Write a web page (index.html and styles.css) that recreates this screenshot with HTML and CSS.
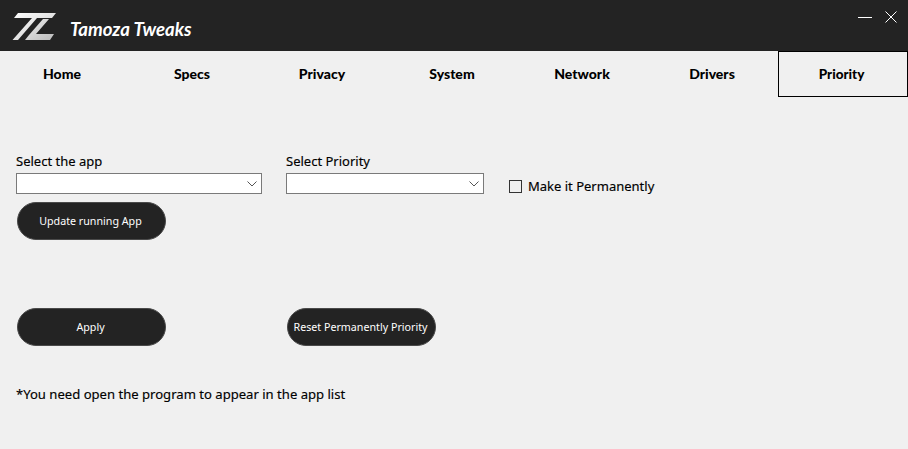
FILE: index.html
```html
<!DOCTYPE html>
<html lang="en">
<head>
<meta charset="utf-8">
<title>Tamoza Tweaks</title>
<link rel="stylesheet" href="styles.css">
</head>
<body>
<div class="app">
  <header class="titlebar">
    <svg class="logo" width="46" height="30" viewBox="0 0 46 30" aria-hidden="true">
      <defs>
        <linearGradient id="lg" x1="0" y1="0" x2="1" y2="1">
          <stop offset="0" stop-color="#ffffff"/>
          <stop offset="1" stop-color="#c8c8c8"/>
        </linearGradient>
      </defs>
      <path fill="url(#lg)" d="M6 1H44L40 6H25L6 28H0.5L20 6H2Z"/>
      <path fill="url(#lg)" d="M31 7H37L24 22H42L38 28H13L17 23Z" opacity="0.92"/>
    </svg>
    <div class="brand">Tamoza Tweaks</div>
    <div class="winctl">
      <span class="min"></span>
      <svg class="close" width="12" height="12" viewBox="0 0 12 12" aria-hidden="true"><path d="M.5.5l11 11M11.500.5l-11 11" stroke="#fff" stroke-width="1" fill="none"/></svg>
    </div>
  </header>
  <nav class="tabs">
    <div class="tab">Home</div>
    <div class="tab">Specs</div>
    <div class="tab">Privacy</div>
    <div class="tab">System</div>
    <div class="tab">Network</div>
    <div class="tab">Drivers</div>
    <div class="tab active">Priority</div>
  </nav>
  <main class="content">
    <div class="row-top">
      <div class="col col-app">
        <label class="lbl">Select the app</label>
        <div class="select">
          <svg width="10" height="6" viewBox="0 0 10 6" aria-hidden="true"><path d="M.5.500l4.500 4.500 4.500-4.500" stroke="#555" fill="none"/></svg>
        </div>
        <button class="btn btn-update">Update running App</button>
      </div>
      <div class="col col-pri">
        <label class="lbl">Select Priority</label>
        <div class="select">
          <svg width="10" height="6" viewBox="0 0 10 6" aria-hidden="true"><path d="M.5.500l4.500 4.500 4.500-4.500" stroke="#555" fill="none"/></svg>
        </div>
      </div>
      <div class="check">
        <span class="box"></span>
        <span class="check-text">Make it Permanently</span>
      </div>
    </div>
    <div class="row-actions">
      <button class="btn">Apply</button>
      <button class="btn">Reset Permanently Priority</button>
    </div>
    <p class="note">*You need open the program to appear in the app list</p>
  </main>
</div>
</body>
</html>
```

FILE: styles.css
```css
* { box-sizing: border-box; }
html, body { margin: 0; padding: 0; }
body { background: #f0f0f0; font-family: "Noto Sans", "Open Sans", sans-serif; width: 908px; height: 449px; overflow: hidden; }
.titlebar { height: 51px; background: #232323; display: flex; align-items: center; padding-left: 12px; position: relative; }
.logo { flex: none; margin-top: 3px; }
.brand { margin-left: 12px; margin-top: 7px; font-family: "Lato", sans-serif; font-style: italic; font-weight: 700; font-size: 18.600px; color: #fff; }
.winctl { margin-left: auto; display: flex; align-items: center; gap: 13px; padding: 0 11px 0 0; align-self: flex-start; height: 34px; }
.min { display: block; width: 14px; height: 1px; background: #fff; }
.close { display: block; }
.tabs { display: grid; grid-template-columns: repeat(7, 130px); height: 46px; margin-left: -2px; }
.tab { display: flex; align-items: center; justify-content: center; font-family: "Lato", sans-serif; font-weight: 900; font-size: 14px; color: #000; padding-bottom: 1px; padding-right: 2px; }
.active { border: 1px solid #000; padding-right: 3px; font-size: 13.500px; }
.content { padding: 56px 0 0 16px; }
.row-top { display: flex; align-items: flex-start; height: 155px; }
.lbl { display: block; font-size: 13px; font-weight: 400; line-height: 17px; color: #000; -webkit-text-stroke: 0.15px #000; }
.col-app { width: 270px; }
.col-pri { width: 223px; }
.select { margin-top: 3px; height: 21px; background: #fff; border: 1px solid #7a7a7a; display: flex; align-items: center; justify-content: flex-end; padding-right: 4px; }
.col-app .select { width: 246px; }
.col-pri .select { width: 198px; }
.btn { display: block; width: 149px; height: 38px; border-radius: 19px; border: 1px solid #4a4a4a; background: #232323; color: #fff; font-family: "Noto Sans", "Open Sans", sans-serif; font-size: 10.700px; font-weight: 400; padding: 0 2px 1px 0; }
.btn-update { margin: 8px 0 0 1px; }
.check { display: flex; align-items: center; margin-top: 24px; }
.box { width: 13px; height: 13px; border: 1px solid #333; background: #f0f0f0; margin-right: 6px; }
.check-text { font-size: 13px; font-weight: 400; color: #000; -webkit-text-stroke: 0.15px #000; }
.row-actions { display: flex; gap: 121px; padding-left: 1px; }
.note { margin: 40px 0 0; font-size: 13.080px; font-weight: 400; line-height: 17px; color: #000; -webkit-text-stroke: 0.15px #000; }
```
